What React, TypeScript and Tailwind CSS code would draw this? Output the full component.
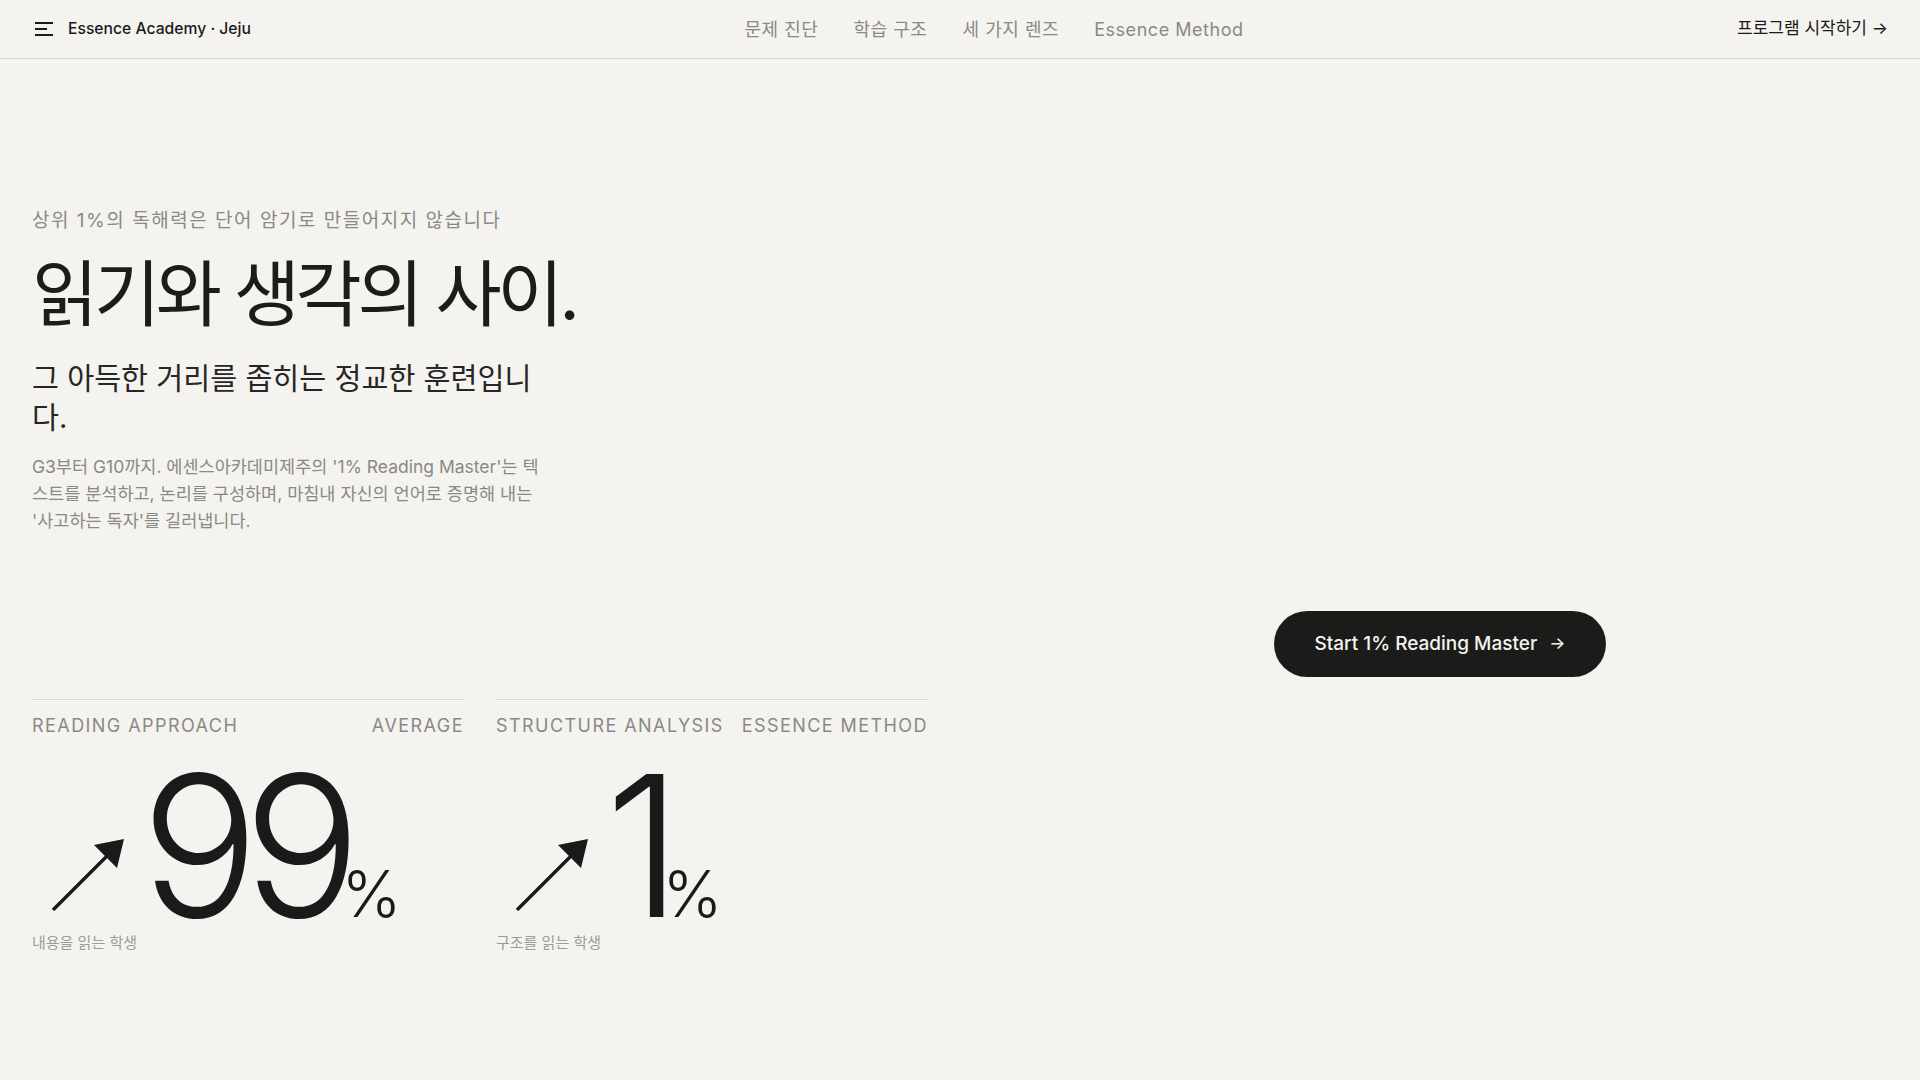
import React from "react";

const navLinks = ["문제 진단", "학습 구조", "세 가지 렌즈", "Essence Method"];

const stats = [
  { left: "Reading Approach", right: "Average", value: "99", caption: "내용을 읽는 학생" },
  { left: "Structure Analysis", right: "Essence Method", value: "1", caption: "구조를 읽는 학생" },
];

function MenuIcon() {
  return (
    <svg width="18" height="14" viewBox="0 0 18 14" fill="none" className="text-[#1a1a1a]">
      <path d="M0 1h18M0 7h12M0 13h18" stroke="currentColor" strokeWidth="1.8" />
    </svg>
  );
}

function UpArrow() {
  return (
    <svg width="72" height="72" viewBox="0 0 72 72" className="shrink-0 text-[#1a1a1a]">
      <path d="M1 71L60 12" stroke="currentColor" strokeWidth="3.4" />
      <path d="M72 0L42 6L65 29Z" fill="currentColor" />
    </svg>
  );
}

export default function App() {
  return (
    <div className="min-h-screen bg-[#f4f3ef] text-[#1a1a1a] font-[Inter,'Noto_Sans_CJK_KR',sans-serif]">
      {/* Top bar */}
      <header className="h-[59px] px-8 flex items-center justify-between border-b border-[#d7d6d1]">
        <div className="flex items-center gap-[15px] pl-[3px]">
          <MenuIcon />
          <span className="text-[15.7px] font-medium">Essence Academy · Jeju</span>
        </div>
        <nav className="flex items-center gap-[35px] text-[18px] tracking-[0.03em] text-[#8a8985]">
          {navLinks.map((l) => (
            <a key={l} className="cursor-pointer hover:text-[#1a1a1a]">
              {l}
            </a>
          ))}
        </nav>
        <a className="text-[17px] text-[#1a1a1a] cursor-pointer">프로그램 시작하기 →</a>
      </header>

      <main className="px-8 pt-[148px]">
        <div className="grid grid-cols-2 gap-x-16 gap-y-[22px]">
          {/* Hero copy */}
          <div className="max-w-[512px] pb-[143px]">
            <p className="text-[19px] leading-[27px] tracking-[0.08em] text-[#8a8985]">
              상위 1%의 독해력은 단어 암기로 만들어지지 않습니다
            </p>
            <h1 className="mt-5 text-[72px] leading-[1.1] tracking-[-0.06em] font-normal text-[#1c1c1b] whitespace-nowrap">
              읽기와 생각의 사이.
            </h1>
            <h2 className="mt-[26px] text-[29.3px] leading-[39px] text-[#262624]">
              그 아득한 거리를 좁히는 정교한 훈련입니다.
            </h2>
            <p className="mt-4 text-[17.5px] leading-[27px] text-[#8a8985]">
              G3부터 G10까지. 에센스아카데미제주의 '1% Reading Master'는 텍스트를 분석하고, 논리를 구성하며, 마침내 자신의
              언어로 증명해 내는 '사고하는 독자'를 길러냅니다.
            </p>
          </div>

          <div className="self-end justify-self-center">
            <button className="h-[66px] px-10 rounded-full bg-[#1b1b1a] text-[#f4f3ef] text-[19px] font-medium flex items-center">
              Start 1% Reading Master
              <span className="ml-3 text-[17px]">→</span>
            </button>
          </div>

          {/* Stats */}
          <div className="grid grid-cols-2 gap-8">
            {stats.map((s) => (
              <div key={s.left} className="border-t border-[#d7d6d1] pt-3">
                <div className="flex justify-between text-[18px] leading-[27px] uppercase tracking-[0.08em] text-[#8a8985]">
                  <span>{s.left}</span>
                  <span>{s.right}</span>
                </div>
                <div className="mt-[29px] flex items-end">
                  <div className="ml-5 mb-[14px]">
                    <UpArrow />
                  </div>
                  <span className="ml-[17px] text-[196px] leading-[0.8] font-light tracking-[-0.08em] text-[#1a1a1a]">
                    {s.value}
                    <span className="ml-[-4px] text-[64px] tracking-normal">%</span>
                  </span>
                </div>
                <p className="mt-[7px] text-[15px] leading-[22px] text-[#9c9b96]">{s.caption}</p>
              </div>
            ))}
          </div>
          <div />
        </div>
      </main>
    </div>
  );
}
